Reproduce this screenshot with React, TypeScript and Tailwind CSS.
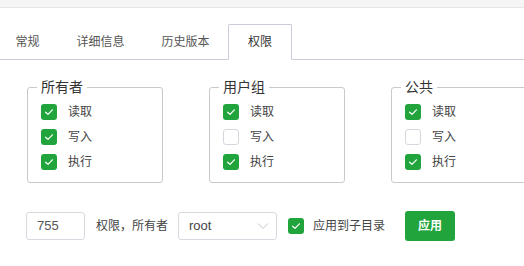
import React from 'react';

const font = { fontFamily: '"Liberation Sans", "Noto Sans CJK SC", sans-serif' };

const tabs = ['常规', '详细信息', '历史版本', '权限'];

const groups: { title: string; perms: [string, boolean][] }[] = [
  { title: '所有者', perms: [['读取', true], ['写入', true], ['执行', true]] },
  { title: '用户组', perms: [['读取', true], ['写入', false], ['执行', true]] },
  { title: '公共', perms: [['读取', true], ['写入', false], ['执行', true]] },
];

function Check({ checked }: { checked: boolean }) {
  if (!checked) {
    return <span className="block w-4 h-4 rounded-[3px] border border-[#d6d6de] bg-white" />;
  }
  return (
    <span className="flex w-4 h-4 items-center justify-center rounded-[3px] bg-[#22a43d]">
      <svg width="16" height="16" viewBox="0 0 16 16" fill="none">
        <polyline points="4.6,8.2 7,10.4 11.4,5.8" stroke="#fff" strokeWidth="1.2" strokeLinecap="round" strokeLinejoin="round" />
      </svg>
    </span>
  );
}

export default function App() {
  return (
    <div className="w-[524px] h-[266px] overflow-hidden bg-white text-[#444]" style={font}>
      {/* top strip */}
      <div className="h-[8px] bg-[#f5f5f5] border-b border-[#e6e6e6]" />

      {/* Tabs */}
      <div className="flex pt-[16px] border-b border-[#cdcbdb]">
        <div className="flex -ml-[3px]">
          {tabs.map((t, i) => {
            const active = i === tabs.length - 1;
            return (
              <div
                key={t}
                className={
                  active
                    ? 'h-[36px] -mb-px px-[19px] flex items-center text-[12px] text-[#333] bg-white border border-b-white border-[#cdcbdb] rounded-t-[2px]'
                    : 'h-[35px] px-[18.5px] flex items-center text-[12px] text-[#555]'
                }
              >
                {t}
              </div>
            );
          })}
        </div>
      </div>

      {/* Groups */}
      <div className="flex gap-[46px] pl-[27px] mt-[17px]">
        {groups.map((g) => (
          <fieldset
            key={g.title}
            className="shrink-0 w-[136px] border border-[#c9c9c9] rounded-[3px] px-[9px] pb-[8px]"
          >
            <legend className="px-[4px] text-[14px] leading-[20px] text-[#333]">{g.title}</legend>
            <div className="pt-[2px] pl-[4px]">
              {g.perms.map(([label, on]) => (
                <div key={label} className="h-[25px] flex items-center gap-[11px]">
                  <Check checked={on} />
                  <span className="text-[12px] text-[#444]">{label}</span>
                </div>
              ))}
            </div>
          </fieldset>
        ))}
      </div>

      {/* Bottom row */}
      <div className="flex items-center pl-[26px] mt-[28px] h-[30px]">
        <div className="w-[59px] h-[28px] border border-[#d9d9e2] rounded-[3px] flex items-center pl-[10px] text-[13px] text-[#555]">
          755
        </div>
        <span className="ml-[11px] text-[12px] text-[#444]">权限，所有者</span>
        <div className="ml-[10px] w-[99px] h-[28px] border border-[#d9d9e2] rounded-[3px] flex items-center justify-between pl-[10px] pr-[7px] text-[13px] text-[#444]">
          <span>root</span>
          <svg width="12" height="8" viewBox="0 0 12 8" fill="none">
            <polyline points="1,1.5 6,6.5 11,1.5" stroke="#c4c4c8" strokeWidth="1" />
          </svg>
        </div>
        <div className="ml-[11px]">
          <Check checked />
        </div>
        <span className="ml-[9px] text-[12px] text-[#444]">应用到子目录</span>
        <button className="ml-[20px] w-[50px] h-[30px] rounded-[3px] bg-[#22a43d] text-white text-[12px] font-bold">
          应用
        </button>
      </div>
    </div>
  );
}
